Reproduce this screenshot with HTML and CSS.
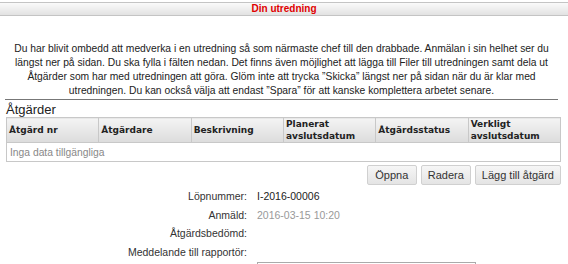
FILE: index.html
```html
<!DOCTYPE html>
<html lang="sv">

<head>
    <meta charset="UTF-8">
    <title>Din utredning</title>
    <link rel="stylesheet" href="styles.css">
</head>

<body>
    <div id="titlebar">Din utredning</div>

    <div id="intro">
        Du har blivit ombedd att medverka i en utredning så som närmaste chef till den drabbade. Anmälan i sin helhet ser du<br>
        längst ner på sidan. Du ska fylla i fälten nedan. Det finns även möjlighet att lägga till Filer till utredningen samt dela ut<br>
        Åtgärder som har med utredningen att göra. Glöm inte att trycka ”Skicka” längst ner på sidan när du är klar med<br>
        utredningen. Du kan också välja att endast ”Spara” för att kanske komplettera arbetet senare.
    </div>

    <div id="actions">
        <div class="section-title">Åtgärder</div>
        <table class="grid">
            <thead>
                <tr>
                    <th>Åtgärd nr</th>
                    <th>Åtgärdare</th>
                    <th>Beskrivning</th>
                    <th>Planerat avslutsdatum</th>
                    <th>Åtgärdsstatus</th>
                    <th>Verkligt avslutsdatum</th>
                </tr>
            </thead>
            <tbody>
                <tr>
                    <td colspan="6" class="empty">Inga data tillgängliga</td>
                </tr>
            </tbody>
        </table>
        <div class="buttons">
            <button class="btn">Öppna</button>
            <button class="btn">Radera</button>
            <button class="btn">Lägg till åtgärd</button>
        </div>
    </div>

    <div id="form">
        <div class="row">
            <div class="label">Löpnummer:</div>
            <div class="value">I-2016-00006</div>
        </div>
        <div class="row">
            <div class="label">Anmäld:</div>
            <div class="value muted">2016-03-15 10:20</div>
        </div>
        <div class="row">
            <div class="label">Åtgärdsbedömd:</div>
            <div class="value"></div>
        </div>
        <div class="row">
            <div class="label">Meddelande till rapportör:</div>
            <div class="value"></div>
        </div>
        <div class="row">
            <div class="label">Rubrik: <span class="req">*</span></div>
            <div class="value"><input type="text" class="textbox"></div>
        </div>
    </div>
</body>

</html>
```

FILE: styles.css
```css
body {
    margin: 0;
    font-family: "Liberation Sans", Arial, sans-serif;
    font-size: 10.5px;
    color: #222;
    background: #fff;
}

#titlebar {
    margin-top: 2px;
    height: 12px;
    line-height: 12px;
    border-top: 1px solid #c4c4c4;
    border-bottom: 1px solid #c4c4c4;
    background: linear-gradient(#fafafa, #e2e2e2);
    text-align: center;
    font-weight: bold;
    font-size: 10px;
    color: #e00000;
}

#intro {
    width: 553px;
    margin: 26px 0 0 5px;
    padding-bottom: 1px;
    line-height: 14px;
    font-size: 10.3px;
    text-align: center;
    white-space: nowrap;
    border-bottom: 1px solid #777;
}

#actions {
    margin: 2px 7px 0 6px;
}

.section-title {
    font-size: 13px;
    line-height: 15px;
}

/*----- grid -----*/
.grid {
    width: 555px;
    border-collapse: collapse;
    table-layout: fixed;
    border: 1px solid #c8c8c8;
}

.grid th {
    height: 23px;
    padding: 0 2px;
    border-left: 1px solid #c8c8c8;
    background: linear-gradient(#f4f4f4, #dcdcdc);
    text-align: left;
    vertical-align: middle;
    font-family: "DejaVu Sans", Verdana, sans-serif;
    font-size: 9px;
    line-height: 12px;
}

.grid td {
    height: 18px;
    padding: 0 3px;
    border-top: 1px solid #c8c8c8;
    font-size: 10.3px;
}

.empty {
    color: #888;
}

.buttons {
    display: flex;
    justify-content: flex-end;
    gap: 4px;
    margin-top: 3px;
    width: 555px;
}

.btn {
    min-width: 50px;
    height: 20px;
    padding: 0 6px;
    border: 1px solid #d0d0d0;
    border-radius: 2px;
    background: linear-gradient(#f6f6f6, #e4e4e4);
    font-family: inherit;
    font-size: 11px;
    color: #333;
}

/*----- form -----*/
#form {
    margin-top: 2px;
}

.row {
    display: flex;
    height: 18.5px;
    align-items: center;
}

.label {
    width: 247px;
    text-align: right;
    color: #333;
}

.value {
    padding-left: 10px;
}

.muted {
    color: #999;
}

.req {
    color: #e00000;
}

.textbox {
    box-sizing: border-box;
    width: 219px;
    height: 16px;
    border: 1px solid #aaa;
}
```
